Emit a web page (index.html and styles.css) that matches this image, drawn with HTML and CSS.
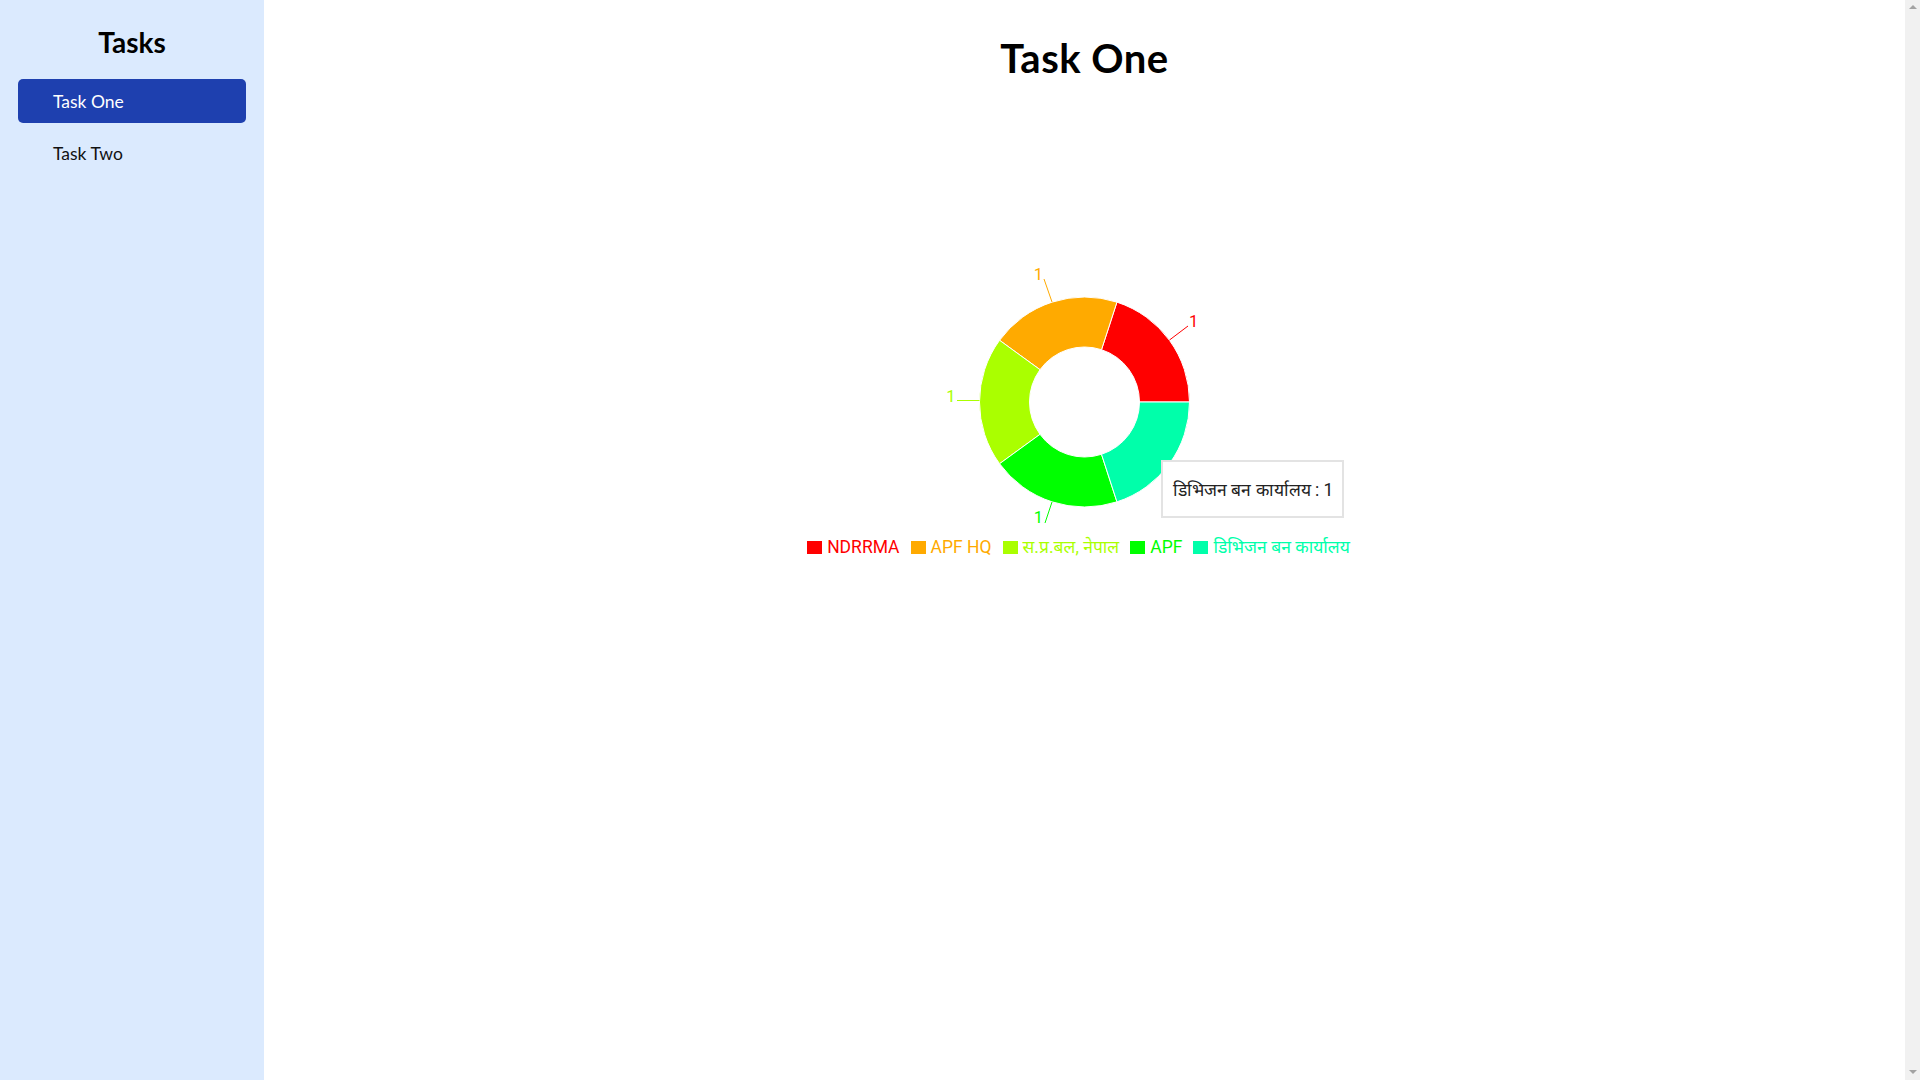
FILE: index.html
```html
<!DOCTYPE html>
<html lang="en">
<head>
<meta charset="utf-8">
<title>Tasks</title>
<link rel="stylesheet" href="styles.css">
</head>
<body>
<div class="app">
  <aside class="sidebar">
    <h2 class="sidebar-title">Tasks</h2>
    <nav class="nav">
      <a class="nav-item active">Task One</a>
      <a class="nav-item">Task Two</a>
    </nav>
  </aside>
  <main class="main">
    <h1 class="page-title">Task One</h1>
    <div class="chart">
      <svg class="chart-svg" width="1641" height="335" viewBox="0 0 1641 335">
        <g transform="translate(820.5,201)">
          <g stroke="#fff" stroke-width="1" stroke-linejoin="round">
            <path fill="#ff0000" d="M105 0 A105 105 0 0 0 32.45 -99.86 L17 -52.31 A55 55 0 0 1 55 0 Z"/>
            <path fill="#ffaa00" d="M32.45 -99.86 A105 105 0 0 0 -84.95 -61.72 L-44.5 -32.33 A55 55 0 0 1 17 -52.31 Z"/>
            <path fill="#aaff00" d="M-84.95 -61.72 A105 105 0 0 0 -84.95 61.72 L-44.5 32.33 A55 55 0 0 1 -44.5 -32.33 Z"/>
            <path fill="#00ff00" d="M-84.95 61.72 A105 105 0 0 0 32.45 99.86 L17 52.31 A55 55 0 0 1 -44.5 32.33 Z"/>
            <path fill="#00ffaa" d="M32.45 99.86 A105 105 0 0 0 105 0 L55 0 A55 55 0 0 1 17 52.31 Z"/>
          </g>
          <g fill="none" stroke-width="1">
            <path stroke="#ff0000" d="M85 -62 L103.5 -76"/>
            <path stroke="#ffaa00" d="M-32.45 -99.86 L-40.5 -123"/>
            <path stroke="#aaff00" d="M-105 -1.5 L-127.5 -1.5"/>
            <path stroke="#00ff00" d="M-32.45 99.86 L-39.5 121"/>
            <path stroke="#00ffaa" d="M85 62 L103.5 76"/>
          </g>
          <g class="pie-label">
            <text x="104.5" y="-75" fill="#ff0000">1</text>
            <text x="-41.5" y="-122" fill="#ffaa00" text-anchor="end">1</text>
            <text x="-129" y="0" fill="#aaff00" text-anchor="end">1</text>
            <text x="-41.5" y="121" fill="#00ff00" text-anchor="end">1</text>
            <text x="104.5" y="77" fill="#00ffaa">1</text>
          </g>
        </g>
      </svg>
      <ul class="legend">
        <li class="legend-item c-red"><span class="swatch"></span>NDRRMA</li>
        <li class="legend-item c-orange"><span class="swatch"></span>APF HQ</li>
        <li class="legend-item c-lime"><span class="swatch"></span>स.प्र.बल, नेपाल</li>
        <li class="legend-item c-green"><span class="swatch"></span>APF</li>
        <li class="legend-item c-teal"><span class="swatch"></span>डिभिजन बन कार्यालय</li>
      </ul>
      <div class="tooltip">डिभिजन बन कार्यालय : 1</div>
    </div>
  </main>
  <div class="scrollbar" aria-hidden="true">
    <span class="arrow-up"></span>
    <span class="arrow-down"></span>
  </div>
</div>
</body>
</html>
```
FILE: styles.css
```css
body {
  margin: 0;
  font-family: Lato, "Open Sans", sans-serif;
  color: #000;
  background: #fff;
  overflow: hidden;
}
.app {
  display: flex;
  height: 100vh;
}
.sidebar {
  width: 264px;
  flex: 0 0 264px;
  box-sizing: border-box;
  background: #dbeafe;
  padding: 25px 18px 0;
}
.sidebar-title {
  margin: 0 0 20px;
  font-size: 28px;
  line-height: 34px;
  font-weight: 700;
  text-align: center;
}
.nav {
  display: flex;
  flex-direction: column;
  gap: 8px;
}
.nav-item {
  display: flex;
  align-items: center;
  height: 44px;
  padding-left: 35px;
  border-radius: 5px;
  font-size: 17.5px;
  color: #111;
  cursor: pointer;
}
.nav-item.active {
  background: #1e40af;
  color: #fff;
}
.main {
  flex: 1;
  min-width: 0;
}
.page-title {
  margin: 34px 0 0;
  font-size: 40px;
  line-height: 48px;
  letter-spacing: 0.5px;
  font-weight: 700;
  text-align: center;
}
.chart {
  position: relative;
  margin-top: 119px;
}
.chart-svg {
  display: block;
}
.pie-label text {
  font-family: Roboto, "Liberation Sans", sans-serif;
  font-size: 16.5px;
}
.legend {
  list-style: none;
  margin: 0;
  padding: 0 12px 0 0;
  display: flex;
  justify-content: center;
  gap: 11px;
  font-family: Roboto, "Liberation Sans", "Noto Sans", sans-serif;
  font-size: 17.5px;
  line-height: 22px;
}
.legend-item {
  display: flex;
  align-items: center;
  gap: 5px;
}
.swatch {
  width: 15px;
  height: 13px;
  background: currentColor;
  margin-top: 1px;
}
.c-red { color: #ff0000; }
.c-orange { color: #ffaa00; }
.c-lime { color: #aaff00; }
.c-green { color: #00ff00; }
.c-teal { color: #00ffaa; }
.tooltip {
  position: absolute;
  left: 897px;
  top: 259px;
  width: 183px;
  height: 58px;
  box-sizing: border-box;
  border: 2px solid #e3e3e3;
  background: #fff;
  padding: 0 10px;
  display: flex;
  align-items: center;
  font-family: Roboto, "Liberation Sans", sans-serif;
  font-size: 17.5px;
  color: #222;
  white-space: nowrap;
}
.scrollbar {
  flex: 0 0 15px;
  width: 15px;
  background: #f1f1f1;
  display: flex;
  flex-direction: column;
  justify-content: space-between;
  align-items: center;
  padding: 5px 0 6px;
  box-sizing: border-box;
}
.arrow-up {
  width: 0;
  height: 0;
  border-left: 4px solid transparent;
  border-right: 4px solid transparent;
  border-bottom: 4px solid #a3a3a3;
}
.arrow-down {
  width: 0;
  height: 0;
  border-left: 4px solid transparent;
  border-right: 4px solid transparent;
  border-top: 4px solid #a3a3a3;
}
```
